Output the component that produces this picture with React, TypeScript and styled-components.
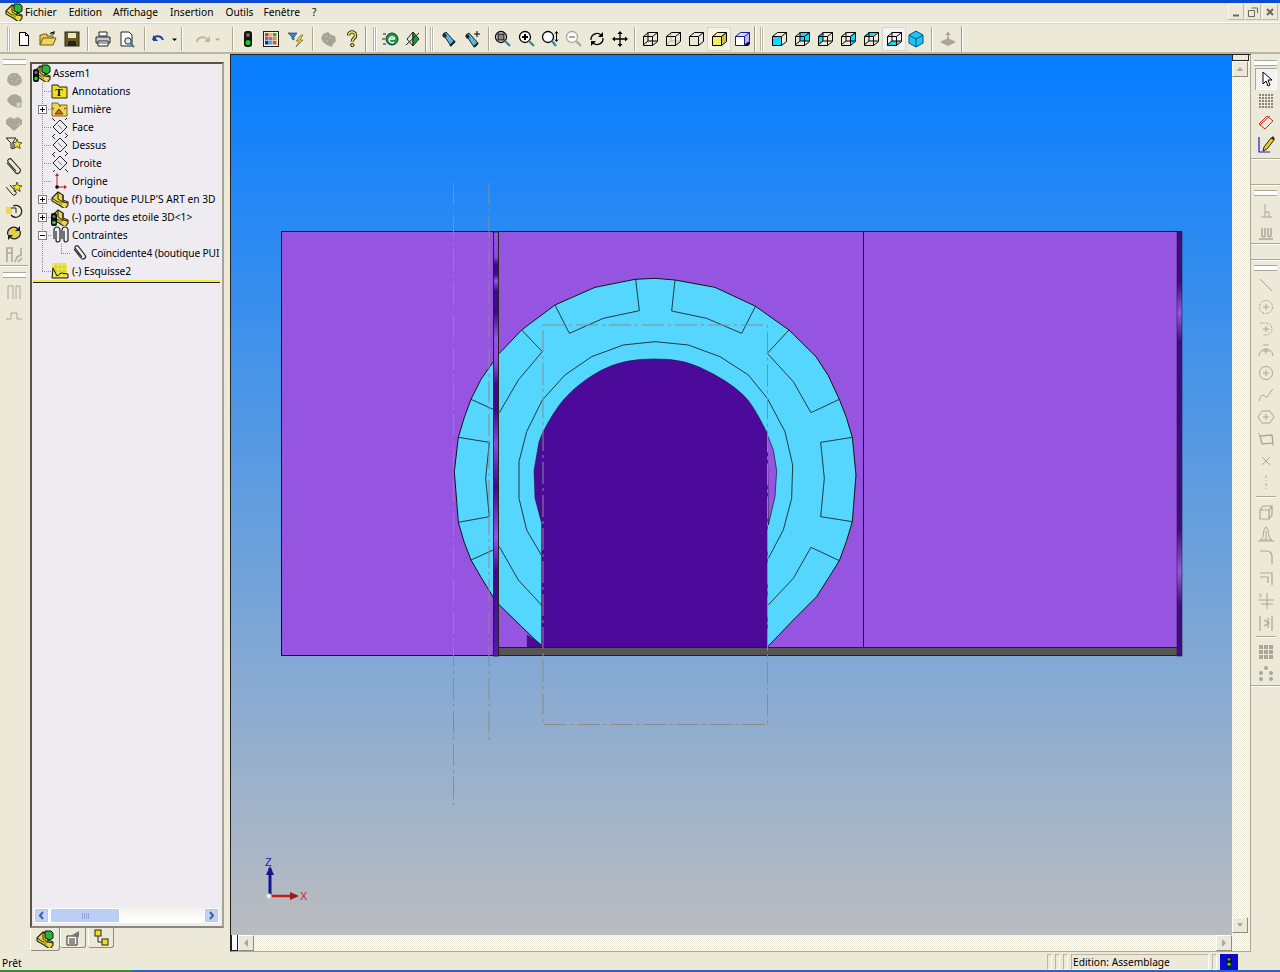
import React from "react";
import styled, { createGlobalStyle } from "styled-components";

const Global = createGlobalStyle`
  html, body { margin: 0; padding: 0; background: #ece9d8; }
  body { font-family: "Noto Sans", "Liberation Sans", sans-serif; font-size: 10.2px; color: #000; }
`;

const Page = styled.div`
  width: 1280px; height: 972px; overflow: hidden; display: flex; flex-direction: column; background: #ece9d8;
  & > * { flex: none; }
`;
const TitleStrip = styled.div`height: 3px; background: #0a4bd2;`;
const MenuBar = styled.div`
  height: 20px; display: flex; align-items: center; box-sizing: border-box; padding: 0 0 1px 2px; border-bottom: 1px solid #fff;
`;
const AppLogo = styled.div`width: 23px; height: 18px; display: flex; align-items: center; justify-content: center;`;
const MenuItem = styled.span<{ $mr: number }>`font-size: 10.2px; margin-right: ${p => p.$mr}px; line-height: 18px; white-space: nowrap;`;
const WindowButtons = styled.div`margin-left: auto; display: flex; gap: 1px; padding-right: 2px;`;
const WindowButton = styled.div`
  width: 16px; height: 16px; display: flex; align-items: center; justify-content: center; background: #ece9d8;
  box-shadow: inset -1px -1px 0 #bdbaa8, inset 1px 1px 0 #f7f6ef;
`;
const ToolRow = styled.div`
  height: 31px; box-sizing: border-box; display: flex; align-items: center; padding: 2px 0 0 4px;
  border-top: 1px solid #d8d5c4; border-bottom: 2px solid #b8b5a4;
`;
const Grip = styled.div<{ $w: number }>`
  width: ${p => p.$w}px; height: 24px; flex: none; display: flex; justify-content: center; gap: 1px;
  &::before, &::after { content: ""; width: 1px; height: 24px; background: #b9b6a5; box-shadow: 1px 0 0 #fff; }
`;
const Sep = styled.div<{ $w: number }>`
  width: ${p => p.$w}px; height: 24px; flex: none; display: flex; justify-content: center;
  &::before { content: ""; width: 1px; height: 24px; background: #aca899; box-shadow: 1px 0 0 #fff; }
`;
const Divider = styled.div<{ $w: number }>`
  width: ${p => p.$w}px; height: 26px; flex: none; display: flex; justify-content: center;
  &::before { content: ""; width: 1px; height: 26px; background: #9d9a8a; box-shadow: 1px 0 0 #fff; }
`;
const Slot = styled.div<{ $w: number; $on?: boolean }>`
  width: ${p => p.$w}px; height: 24px; flex: none; display: flex; align-items: center; justify-content: center;
  ${p => p.$on ? `background: repeating-conic-gradient(#fff 0 25%, #ece9d8 0 50%) 0 0/2px 2px; box-shadow: inset 0 0 0 1px #d8d5c8;` : ""}
`;
const Icon = styled.svg<{ $s?: number }>`
  width: ${p => p.$s || 18}px; height: ${p => p.$s || 18}px; display: block; flex: none;
`;

const Main = styled.div`height: 898px; display: flex;`;
const SideTools = styled.div<{ $w: number }>`
  width: ${p => p.$w}px; flex: none; display: flex; flex-direction: column; align-items: center; box-sizing: border-box;
`;
const VGrip = styled.div<{ $m: number }>`
  width: 23px; height: 4px; flex: none; box-sizing: content-box; border-top: 1px solid #aca899; border-bottom: 1px solid #aca899; background: #fff; margin-top: ${p => p.$m}px;
`;
const VSlot = styled.div<{ $h: number; $on?: boolean }>`
  height: ${p => p.$h}px; width: 22px; flex: none; display: flex; align-items: center; justify-content: center;
  ${p => p.$on ? `background: repeating-conic-gradient(#fff 0 25%, #ece9d8 0 50%) 0 0/2px 2px; box-shadow: inset 1px 1px 0 #aca899, inset -1px -1px 0 #fff;` : ""}
`;
const HLine = styled.div<{ $m: number; $full?: boolean }>`
  height: 1px; flex: none; align-self: ${p => p.$full ? "stretch" : "center"}; width: ${p => p.$full ? "auto" : "20px"};
  background: #aca899; box-shadow: 0 1px 0 #fff; margin-top: ${p => p.$m}px;
`;

const TreePane = styled.div`
  width: 202px; flex: none; box-sizing: border-box; padding: 8px 6px 0 2px; display: flex; flex-direction: column;
`;
const TreeBox = styled.div`
  height: 866px; flex: none; box-sizing: border-box; background: #eeecf0; border: 2px solid #55534a; border-right-color: #a5a296; border-bottom-color: #8a8778;
  display: flex; flex-direction: column; overflow: hidden;
`;
const TreeRows = styled.div`height: 216px; width: 188px; overflow: hidden; flex: none; padding-left: 1px; box-sizing: border-box;`;
const TreeRow = styled.div`height: 18px; display: flex; align-items: center; white-space: nowrap; overflow: hidden;`;
const Guide = styled.div<{ $v: "none" | "full" | "end" | "pass"; $h?: boolean; $w: number }>`
  width: ${p => p.$w}px; height: 18px; flex: none; display: flex; align-items: center; justify-content: center; box-sizing: border-box;
  background-repeat: no-repeat;
  background-image:
    ${p => p.$h ? "repeating-linear-gradient(90deg, #8f8d88 0 1px, transparent 1px 2px)" : "none"},
    ${p => p.$v === "none" ? "none" : "repeating-linear-gradient(0deg, #8f8d88 0 1px, transparent 1px 2px)"};
  background-size: 50% 1px, 1px ${p => p.$v === "end" ? "9px" : "18px"};
  background-position: right center, center top;
`;
const Twisty = styled.div`
  width: 9px; height: 9px; box-sizing: border-box; border: 1px solid #7f7d75; background: #fff; display: flex; align-items: center; justify-content: center;
`;
const RowIcon = styled.div`width: 18px; height: 18px; flex: none; display: flex; align-items: center; justify-content: center;`;
const RowText = styled.span<{ $g: number; $tight?: boolean }>`
  margin-left: ${p => p.$g}px; font-size: 10.2px; line-height: 18px; letter-spacing: ${p => p.$tight ? "-.12px" : "0"};
`;
const YellowRule = styled.div`height: 3px; width: 187px; box-sizing: border-box; margin-left: 1px; flex: none; background: #f6ec3c; border-bottom: 1px solid #222;`;
const TreeSpace = styled.div`flex: 1;`;
const HTreeScroll = styled.div`
  height: 15px; flex: none; margin: 0 3px 3px 2px; display: flex; align-items: center; background: linear-gradient(#f3f2ef, #fff);
`;
const XpBtn = styled.div`
  width: 15px; height: 15px; box-sizing: border-box; flex: none; border: 1px solid #fff; border-radius: 2px; background: #c3d3f7; box-shadow: 0 0 0 1px #b3c6ef inset;
  display: flex; align-items: center; justify-content: center;
`;
const XpThumb = styled.div`
  width: 70px; margin-left: 1px; height: 15px; box-sizing: border-box; border: 1px solid #fff; border-radius: 2px; background: #bdcef6;
  display: flex; align-items: center; justify-content: center; gap: 1px;
`;
const ThumbTick = styled.span`width: 1px; height: 6px; background: #8ea7d8;`;
const XpFill = styled.div`flex: 1;`;
const Tabs = styled.div`display: flex; padding-left: 0; height: 24px; flex: none;`;
const Tab = styled.div<{ $on?: boolean; $w: number }>`
  width: ${p => p.$w}px; box-sizing: border-box; height: ${p => p.$on ? 23 : 20}px; display: flex; align-items: center; justify-content: center; background: #ece9d8;
  border-right: 1px solid #8f8c7c; border-bottom: 1px solid #8f8c7c; border-radius: 0 0 3px 3px; margin-right: ${p => p.$on ? 0 : 2}px;
  ${p => p.$on ? "border-left: 1px solid #fff;" : "box-shadow: inset 1px 0 0 #fff;"}
`;

const ViewArea = styled.div`
  width: 1021px; flex: none; box-sizing: border-box; display: grid; grid-template-columns: 1001px 18px; grid-template-rows: 880px 16px;
  border-top: 1px solid #222; border-left: 1px solid #222; height: 898px; background: repeating-conic-gradient(#fff 0 25%, #ece9d8 0 50%) 0 0/2px 2px; border-right: 1px solid #aca899; border-bottom: 1px solid #aca899;
`;
const Canvas = styled.svg`width: 1001px; height: 880px; display: block;`;
const VScroll = styled.div`display: flex; flex-direction: column; align-items: flex-start;`;
const VScrollTop = styled.div`width: 17px; height: 6px; box-sizing: border-box; flex: none; background: #ece9d8; border: 1px solid #222; border-top: 0;`;
const ScrollSpacer = styled.div`flex: 1;`;
const HScroll = styled.div`display: flex; align-items: flex-start;`;
const HStub = styled.div`width: 7px; height: 16px; box-sizing: border-box; background: #fff; border: 1px solid #222; border-top: 0; flex: none;`;
const ScrollBtn = styled.div<{ $mb?: number }>`
  width: 16px; height: 16px; flex: none; box-sizing: border-box; background: #ece9d8; display: flex; align-items: center; justify-content: center;
  border: 1px solid; border-color: #fff #8f8c7c #8f8c7c #fff; margin-bottom: ${p => p.$mb || 0}px;
`;

const StatusBar = styled.div`
  height: 16px; margin-top: 2px; box-sizing: border-box; display: flex; align-items: stretch; padding-right: 0;
`;
const StatusText = styled.div`padding-left: 2px; flex: 1; font-size: 10.2px; line-height: 18px;`;
const Groove = styled.div<{ $w: number; $mr: number }>`
  width: ${p => p.$w}px; margin-right: ${p => p.$mr}px; box-sizing: border-box; flex: none; border: 1px solid #b9b6a5; border-right-color: #fff; border-bottom-color: #fff;
  font-size: 10.2px; line-height: 14px; padding-left: ${p => p.$w > 20 ? 1 : 0}px; white-space: nowrap;
`;
const StatusLight = styled.div`width: 18px; flex: none; background: #0a0ad2; display: flex; align-items: center; justify-content: center; margin-right: 42px;`;
const TaskStrip = styled.div`height: 2px; flex: none; display: flex; background: #2a64c8;`;
const TaskGreen = styled.div`width: 132px; background: #3a8a3a;`;

const S = ({ children, s = 18 }: { children: React.ReactNode; s?: number }) => (
  <Icon $s={s} viewBox="0 0 18 18">{children}</Icon>
);
const Mag = ({ c = "#000", h = "#2f8fa0", inner }: { c?: string; h?: string; inner?: React.ReactNode }) => (
  <S>
    <circle cx="7" cy="7" r="5.5" fill="#fff" stroke={c} strokeWidth="1.3" />
    {inner}
    <path d="M11 11l5 5" stroke={h} strokeWidth="2.4" />
  </S>
);
const Cube = ({ front, top, right, back, left, bottom, stroke = "#000", hidden = true, hiddenColor, shadow }: any) => (
  <S>
    {shadow && <path d="M4 16h11l2-2v-2H6z" fill="#000" />}
    {back && <path d="M7 2h9v9H7z" fill={back} />}
    {left && <path d="M2 6l5-4v9l-5 4z" fill={left} />}
    {bottom && <path d="M2 15l5-4h9l-5 4z" fill={bottom} />}
    {front && <path d="M2 6h9v9H2z" fill={front} />}
    {top && <path d="M2 6l5-4h9l-5 4z" fill={top} />}
    {right && <path d="M11 6l5-4v9l-5 4z" fill={right} />}
    {hidden && <path d="M7 2v9H16M7 11l-5 4" fill="none" stroke={hiddenColor || stroke} strokeWidth="1" />}
    <path d="M2.5 6.5h9v9h-9zM2.5 6.5l5-4h9v9l-5 4M11.5 6.5l5-4" fill="none" stroke={stroke} strokeWidth="1" />
  </S>
);
const Gray = "#a9a69a";
const GL = ({ children }: { children: React.ReactNode }) => (
  <S><g fill="none" stroke={Gray} strokeWidth="1">{children}</g></S>
);
const Blocks = ({ green, light }: { green?: boolean; light?: boolean }) => (
  <S s={18}>
    <path d="M1 8l6-6 5 3v5l5 2v3l-3 4-6-4-7-4z" fill="#efd93a" stroke="#222" strokeWidth="1.100" />
    <path d="M7 2v7l5 3v-7M1 8l6 4 5 0M12 12l5 1" fill="none" stroke="#222" strokeWidth="1" />
    <path d="M8 10l3 2v4l-3-2z" fill="#b9a420" />
    {green && <path d="M9 1h6l2 2v5l-3 2-5-2z" fill="#27b53a" stroke="#111" />}
    {light && <g><rect x="0" y="5" width="6" height="13" rx="2" fill="#111" /><circle cx="3" cy="8.500" r="1.500" fill="#777" /><circle cx="3" cy="14.500" r="1.800" fill="#2d2" /></g>}
  </S>
);
const Plane = () => (
  <S>
    <path d="M9 2l7 7-7 7-7-7z" fill="none" stroke="#222" />
    <path d="M7 7l4 4" stroke="#777" />
    <path d="M1 0l3 3M17 18l-3-3M2 18l2-2M16 0l-2 2" stroke="#222" />
  </S>
);
const Clip = ({ x = 0 }: { x?: number }) => (
  <path transform={`translate(${x} 0)`} d="M2 5v9a2 2 0 0 0 4 0V4a3 3 0 0 0-6 0v9" fill="none" stroke="#222" strokeWidth="1.2" />
);

const ic: Record<string, React.ReactNode> = {
  new: <S><path d="M4.5 2.5h6l3 3v10h-9zM10.5 2.5v3h3" fill="#fff" stroke="#000" /></S>,
  open: <S><path d="M1 15V5h2l1-1h4v2h6v2" fill="#e9c84a" stroke="#6b5a10" /><path d="M1 15l3-7h13l-3 7z" fill="#f1d35f" stroke="#6b5a10" /><path d="M11 4c1-2 3-2 4-1" stroke="#000" fill="none" /><path d="M15 1v3h-3" stroke="#000" fill="none" /></S>,
  save: <S><rect x="2" y="2" width="14" height="14" fill="#6a5c18" stroke="#222" /><rect x="5" y="3" width="8" height="5" fill="#e9e6c8" /><rect x="5" y="11" width="8" height="5" fill="#222" /></S>,
  print: <S><path d="M5 2h8v4H5z" fill="#fff" stroke="#222" /><path d="M2 7h14v6H2z" fill="#ccc" stroke="#222" /><path d="M4 11h10v5H4z" fill="#fff" stroke="#222" /><path d="M5 13h8" stroke="#555" /></S>,
  preview: <S><path d="M3 2h8l3 3v11H3z" fill="#fff" stroke="#222" /><circle cx="10" cy="11" r="3.2" fill="#d3ecf2" stroke="#222" /><path d="M12 13l4 4" stroke="#2f7f8f" strokeWidth="2" /></S>,
  undo: <S><path d="M5 10c2-5 9-5 10 0" transform="scale(-1 1) translate(-18 0)" fill="none" stroke="#1a3fb0" strokeWidth="2" /><path d="M3 5v6h5" fill="#1a3fb0" /></S>,
  redo: <S><path d="M3 12c0-5 7-6 10-3" fill="none" stroke="#b9b7ac" strokeWidth="2" /><path d="M16 6v6h-6z" fill="#b9b7ac" /></S>,
  down: <S s={9}><path d="M4 7h10l-5 5z" fill="#000" /></S>,
  downg: <S s={9}><path d="M4 7h10l-5 5z" fill="#a9a69a" /></S>,
  traffic: <S><rect x="5" y="1" width="8" height="16" rx="3" fill="#111" /><circle cx="9" cy="5" r="2" fill="#7a6a60" /><circle cx="9" cy="12.5" r="2.6" fill="#1ec42e" /></S>,
  colors: <S><rect x="1.5" y="1.5" width="15" height="15" fill="#f4f2dc" stroke="#222" /><rect x="3" y="3" width="3.5" height="3.5" fill="#d33" /><rect x="7" y="3" width="3.5" height="3.5" fill="#e8c020" /><rect x="11" y="3" width="3.5" height="3.5" fill="#3a3" /><rect x="3" y="7" width="3.5" height="3.5" fill="#38c" /><rect x="7" y="7" width="3.5" height="3.5" fill="#d4d" /><rect x="11" y="7" width="3.5" height="3.5" fill="#e83" /><rect x="3" y="11" width="3.5" height="3.5" fill="#22a" /><rect x="7" y="11" width="3.5" height="3.5" fill="#3bb" /><rect x="11" y="11" width="3.5" height="3.5" fill="#e44" /></S>,
  filter: <S><path d="M1 3h9L7 7v3L5 9V7z" fill="#2f8fc0" stroke="#1a3f80" strokeWidth=".7" /><path d="M14 5l-5 6h3l-3 6 7-7h-3l3-5z" fill="#e8d020" stroke="#554" strokeWidth=".6" /></S>,
  grayblob: <S><path d="M4 4l5-2 3 3 4 1 1 5-3 3-1 3-5-2-4-3-2-4z" fill="#a5a398" /><path d="M6 6h2M10 8h2M7 11h2" stroke="#c9c7bb" /></S>,
  help: <S><path d="M5.500 5.500a3.500 3.500 0 1 1 5.500 2.800C9.800 9.300 9.300 10 9.300 11.500" fill="none" stroke="#222" strokeWidth="3.400" /><path d="M5.500 5.500a3.500 3.500 0 1 1 5.500 2.800C9.800 9.300 9.300 10 9.300 11.500" fill="none" stroke="#f2e34c" strokeWidth="1.600" /><circle cx="9.300" cy="15" r="1.700" fill="#f2e34c" stroke="#222" /></S>,
  e: <S><path d="M1 4h3M0 9h3M1 14h3" stroke="#222" /><circle cx="10" cy="9" r="6" fill="#169a3a" stroke="#134" /><path d="M7 9h6M13 9a3 3 0 1 0-1 3" stroke="#fff" strokeWidth="1.4" fill="none" /></S>,
  xg: <S><path d="M3 9l6-7v14z" fill="#d5e9c8" stroke="#222" /><path d="M15 9L9 2v14z" fill="#19a03a" stroke="#222" /><path d="M2 15L15 3" stroke="#222" /></S>,
  bino: <S><path d="M3 4l3-2 9 10-4 4z" fill="#5fb8d8" stroke="#123" /><path d="M2 5l3-2 2 3-3 2z" fill="#222" /><path d="M10 16l5-5" stroke="#123" strokeWidth="2" /></S>,
  binop: <S><path d="M2 5l3-2 9 10-4 4z" fill="#5fb8d8" stroke="#123" /><path d="M1 6l3-2 2 3-3 2z" fill="#222" /><path d="M10 17l4-4" stroke="#123" strokeWidth="2" /><path d="M13 1v6M10 4h6" stroke="#000" /></S>,
  zfit: <Mag inner={<rect x="4" y="4" width="6" height="6" fill="#888" stroke="#000" />} />,
  zin: <Mag inner={<path d="M4 7h6M7 4v6" stroke="#000" strokeWidth="2" />} />,
  zarea: <S><circle cx="7" cy="7" r="5.500" fill="#fff" stroke="#000" strokeWidth="1.300" /><path d="M11 11l4 5" stroke="#2f8fa0" strokeWidth="2.400" /><path d="M15.500 2v9M14 3.500l1.500-2 1.500 2M14 9.500l1.500 2 1.500-2" stroke="#000" fill="none" /></S>,
  zout: <Mag c="#a9a69a" h="#a9a69a" inner={<path d="M4 7h6" stroke="#a9a69a" strokeWidth="2" />} />,
  rotate: <S><path d="M3 10a6 6 0 0 1 10-5" fill="none" stroke="#000" strokeWidth="1.300" /><path d="M15 8a6 6 0 0 1-10 5" fill="none" stroke="#000" strokeWidth="1.300" /><path d="M15 2v5h-5zM3 16v-5h5z" fill="#000" /></S>,
  move: <S><path d="M9 2v14M2 9h14" stroke="#000" strokeWidth="1.300" /><path d="M9 1l2.500 3h-5zM9 17l2.500-3h-5zM1 9l3-2.500v5zM17 9l-3-2.500v5z" fill="#000" /></S>,
  wire: <Cube />,
  hidden: <Cube hiddenColor="#b5b3a8" />,
  nohid: <Cube hidden={false} />,
  shaded: <Cube hidden={false} front="#f2ec6a" top="#f6f18a" right="#c9c33c" />,
  shadow: <Cube hidden={false} stroke="#1a1a90" front="#fff" top="#dde" right="#b8b8ee" shadow />,
  vfront: <Cube hidden={false} front="#19d5ff" />,
  vback: <Cube back="#19d5ff" />,
  vleft: <Cube left="#19d5ff" />,
  vright: <Cube right="#19d5ff" />,
  vtop: <Cube top="#19d5ff" />,
  vbottom: <Cube bottom="#19d5ff" />,
  viso: <S><path d="M9 1l7 4v8l-7 4-7-4V5z" fill="#19c8f5" stroke="#0d4a90" /><path d="M2 5l7 4 7-4M9 9v8" stroke="#0d4a90" fill="none" /></S>,
  plane3: <S><path d="M9 2v8" stroke={Gray} strokeWidth="1.500" /><path d="M6 5l3-3 3 3z" fill={Gray} /><path d="M1 12l8-4 8 4-8 4z" fill={Gray} /></S>,

  l1: <S><path d="M3 6l4-3 5 0 4 4 1 5-3 3-4 1-5-1-3-4z" fill={Gray} /><path d="M5 7h2M9 5h2M12 9h2M6 11h2M10 12h2" stroke="#c9c7bb" /></S>,
  l2: <S><path d="M2 7l4-4 5-1 5 3 1 5-2 2v3h-5l-4-2-3-3z" fill={Gray} /><path d="M11 10h5v5h-5z" fill="#d5d3c8" stroke={Gray} /></S>,
  l3: <S><path d="M1 6l4-3 4 2 4-2 4 3 0 4-8 7-8-7z" fill={Gray} /><path d="M12 12l3-3" stroke="#d5d3c8" /></S>,
  l4: <S><path d="M1 2h10l-3 4v7l-2-1V7z" fill="none" stroke="#222" /><path d="M12 3l1.500 3.500 3.500.3-2.700 2.300.9 3.500-3.200-2-3 2 .9-3.500L7.500 6.800l3.500-.3z" fill="#f2e020" stroke="#222" strokeWidth=".7" /></S>,
  l5: <S><path d="M2 6l8 9a2.500 2.500 0 0 0 5-3L7 3a2 2 0 0 0-4 2l8 9" fill="none" stroke="#222" strokeWidth="1.100" /></S>,
  l6: <S><path d="M1 8l6 7a2 2 0 0 0 4-2L5 6" fill="none" stroke="#222" /><path d="M12 3l1.500 3.500 3.500.3-2.700 2.300.9 3.500-3.200-2-3 2 .9-3.500L7.500 6.800l3.500-.3z" fill="#f2e020" stroke="#222" strokeWidth=".7" /></S>,
  l7: <S><rect x="1" y="5" width="6" height="7" fill="#e8d85a" /><path d="M8 4a6 6 0 1 1-2 9" fill="none" stroke="#222" strokeWidth="1.300" /><path d="M6 6h5v5" fill="none" stroke="#222" /></S>,
  l8: <S><circle cx="9" cy="9" r="5" fill="#dfcf4a" /><path d="M3 11a6 6 0 0 1 10-6M15 7a6 6 0 0 1-10 6" fill="none" stroke="#222" strokeWidth="1.300" /><path d="M15 2v5h-5zM3 16v-5h5z" fill="#222" /></S>,
  l9: <GL><path d="M2 17V3h5v14M2 8h5M10 17l2-5 4-2V3M13 17l4-4" strokeWidth="1.500" /></GL>,
  l10: <GL><path d="M3 16V3h5v13M11 16V3h4v13" /></GL>,
  l11: <GL><path d="M1 13h5V7h6v6h5" /></GL>,

  arrow: <S><path d="M6 2v12l3-3 2 5 2-1-2-5h4z" fill="#fff" stroke="#000" /></S>,
  grid: <S><g fill="#222">{[3, 6, 9, 12, 15].flatMap(x => [3, 6, 9, 12, 15].map(y => <rect key={x + "-" + y} x={x - .7} y={y - .7} width="1.400" height="1.400" />))}</g></S>,
  dim: <S><path d="M2 11l8-8 6 5-8 8z" fill="none" stroke="#d22" /><path d="M3 12l10-9" stroke="#d22" /></S>,
  sketch: <S><path d="M2 1v15h11" fill="none" stroke="#1a1ac0" strokeWidth="1.200" /><path d="M7 11l7-9 3 2-7 9-4 2z" fill="#e8d020" stroke="#222" /><path d="M14 2l3 2 1-1-2-3z" fill="#6a1010" /></S>,
  r1: <GL><path d="M4 16h11M8 16V3M8 11h4v5" /></GL>,
  r2: <GL><path d="M2 16h14M5 5v8a2 2 0 0 0 3 0V5M11 5v8a2 2 0 0 0 3 0V5" strokeWidth="1.500" /></GL>,
  r3: <GL><path d="M3 3l12 12" /></GL>,
  r4: <GL><circle cx="9" cy="9" r="6.500" strokeDasharray="2 1" /><path d="M9 6v6M6 9h6" /></GL>,
  r5: <GL><path d="M3 3h6a6 6 0 0 1 0 12H6" strokeDasharray="2 1" /><path d="M9 6v6M6 9h6" /></GL>,
  r6: <GL><path d="M2 14a7 7 0 0 1 14 0" /><path d="M9 6v6M6 9h6M6 3h6" /></GL>,
  r7: <GL><circle cx="9" cy="9" r="6.500" /><path d="M9 6v6M6 9h6" /></GL>,
  r8: <GL><path d="M2 15c1-3 2-6 4-6s2 3 4 2 3-6 6-8" /></GL>,
  r9: <GL><path d="M5 3h8l4 6-4 6H5L1 9z" /><path d="M9 6v6M6 9h6" /></GL>,
  r10: <GL><path d="M3 6l12-1 1 8-11 1z" strokeWidth="1.400" /><path d="M1 3l3 3M15 14l2 2" /></GL>,
  r11: <GL><path d="M5 5l8 8M13 5l-8 8" /></GL>,
  r12: <GL><path d="M9 1v16" strokeDasharray="3 2 1 2" /></GL>,
  r13: <GL><path d="M3 7h9v9H3zM3 7l3-4h9l-3 4M15 3v9l-3 4" strokeWidth="1.200" /></GL>,
  r14: <GL><path d="M9 1l2 3 1 7 3 3H3l3-3 1-7zM1 15h16M9 5v9" /></GL>,
  r15: <GL><path d="M3 3h7a5 5 0 0 1 5 5v8" strokeWidth="1.200" /></GL>,
  r16: <GL><path d="M3 3h12v12M3 7h8v6" strokeWidth="1.200" /></GL>,
  r17: <GL><path d="M10 1v16M2 8h15M4 12h12M2 2c3 0 3 3 0 3" /></GL>,
  r18: <GL><path d="M3 2v15M15 2v15M7 6l5 3-5 3M11 4v10" strokeWidth="1.200" /></GL>,
  r19: <S><g fill={Gray}>{[2, 7, 12].flatMap(x => [2, 7, 12].map(y => <rect key={x + "_" + y} x={x} y={y} width="4" height="4" />))}</g></S>,
  r20: <S><g fill={Gray}><circle cx="9" cy="3" r="2" /><circle cx="4" cy="8" r="2" /><circle cx="14" cy="8" r="2" /><circle cx="4" cy="14" r="2" /><circle cx="14" cy="14" r="2" /></g></S>,
  close: <Icon $s={10} viewBox="0 0 10 10"><path d="M2 2l6 6M8 2l-6 6" stroke="#6b6a60" strokeWidth="2" /></Icon>,
  min: <Icon $s={10} viewBox="0 0 10 10"><path d="M2 8.500h6" stroke="#6b6a60" strokeWidth="2" /></Icon>,
  restore: <Icon $s={10} viewBox="0 0 10 10"><path d="M3.500 1h6v5M.5 3.500h6v6h-6z" fill="none" stroke="#6b6a60" /></Icon>,
};

type TI = [string, number, boolean?];
const tools: TI[] = [
  ["grip", 8],
  ["new", 24], ["open", 24], ["save", 24], ["sep", 6], ["print", 26], ["preview", 22], ["sep", 12], ["undo", 18], ["down", 12], ["sep", 2],
  ["gap", 12], ["redo", 18], ["downg", 10], ["gap", 5], ["sep", 10], ["traffic", 22], ["colors", 24], ["filter", 26], ["sep", 6], ["grayblob", 26], ["help", 22],
  ["div", 4], ["grip", 14], ["e", 20], ["xg", 23], ["div", 2],
  ["grip", 11], ["bino", 24], ["binop", 24], ["sep", 6], ["zfit", 24], ["zin", 23], ["zarea", 24], ["zout", 23], ["rotate", 23], ["move", 23], ["sep", 7],
  ["wire", 23], ["hidden", 23], ["nohid", 23], ["shaded", 24, true], ["shadow", 22], ["div", 2],
  ["grip", 12], ["vfront", 23], ["vback", 23], ["vleft", 23], ["vright", 23], ["vtop", 23], ["vbottom", 24, true], ["viso", 20], ["sep", 10], ["plane3", 24], ["div", 2],
];

const tree = [
  { t: "Annotations", ic: <S><path d="M1 3h6l1 2h8v11H1z" fill="#f2e020" stroke="#222" /><text x="8" y="14" fontSize="11" fontWeight="700" fontFamily="Liberation Serif, serif" textAnchor="middle">T</text></S> },
  { t: "Lumière", tw: "+", ic: <S><path d="M1 3h6l1 2h8v11H1z" fill="#e8d85a" stroke="#7a6a10" /><path d="M4 14l4-5 4 5zM9 7v-2M13 9l2-1M3 9L1 8" fill="#d26a10" stroke="#7a2a10" /></S> },
  { t: "Face", ic: <Plane /> },
  { t: "Dessus", ic: <Plane /> },
  { t: "Droite", ic: <Plane /> },
  { t: "Origine", ic: <S><path d="M6 15V3M6 15h9" stroke="#d21818" /><path d="M6 1l2 3H4zM16 15l-3-2v4z" fill="#d21818" /><circle cx="6" cy="15" r="1.800" fill="#000" /></S> },
  { t: "(f) boutique PULP'S ART en 3D", tw: "+", ic: <Blocks /> },
  { t: "(-) porte des etoile 3D<1>", tw: "+", ic: <Blocks light /> },
  { t: "Contraintes", tw: "-", ic: <S><Clip x={3} /><Clip x={11} /></S> },
];

const TwMark = ({ k }: { k: string }) => (
  <Icon $s={7} viewBox="0 0 7 7"><path d={k === "+" ? "M1 3.500h5M3.500 1v5" : "M1 3.500h5"} stroke="#000" /></Icon>
);

const menus: [string, number][] = [["Fichier", 12], ["Edition", 11], ["Affichage", 12], ["Insertion", 12], ["Outils", 10], ["Fenêtre", 12], ["?", 0]];
const left: [string, number][] = [["l1", 22], ["l2", 22], ["l3", 22], ["l4", 21], ["l5", 22], ["l6", 22], ["l7", 23], ["l8", 21], ["l9", 22]];
const rt1: [string, number, boolean?][] = [["arrow", 22, true], ["grid", 21], ["dim", 22], ["sketch", 23]];
const rt3 = [["r3", 22], ["r4", 22], ["r5", 22], ["r6", 22], ["r7", 22], ["r8", 22], ["r9", 22], ["r10", 22], ["r11", 22], ["r12", 22]] as [string, number][];
const rt4 = [["r13", 22], ["r14", 23], ["r15", 22], ["r16", 22], ["r17", 22], ["r18", 22]] as [string, number][];

const pts = (a: number[][]) => a.map(p => p.join(",")).join(" ");
const outer = [[178,280],[245,210],[345,135],[465,82],[585,58],[645,55],[705,60],[825,82],[945,138],[1047,210],[1128,290],[1165,347],[1198,418],[1219,472],[1237,532],[1248,645],[1237,785],[1219,845],[1198,902],[1168,950],[1130,1010],[1060,1080],[985,1158],[305,1158],[245,1100],[178,1035],[160,1012],[122,950],[93,900],[72,845],[55,787],[43,635],[55,532],[73,472],[93,418],[123,358],[160,305]];
const ring = [[307,420],[375,345],[455,290],[550,255],[645,245],[745,255],[840,290],[925,345],[982,415],[1035,515],[1058,615],[1055,715],[1030,810],[985,895]];
const ringL = [[307,420],[260,515],[237,605],[237,715],[260,810],[307,890]];
const doorArc = [[307,520],[340,455],[400,385],[480,330],[555,302],[645,295],[735,302],[820,340],[890,385],[940,435],[982,520]];
const smooth = (a: number[][]) => {
  let d = `M${a[0][0]} ${a[0][1]}`;
  for (let i = 1; i < a.length - 1; i++) {
    const mx = (a[i][0] + a[i + 1][0]) / 2, my = (a[i][1] + a[i + 1][1]) / 2;
    d += ` Q${a[i][0]} ${a[i][1]} ${i === a.length - 2 ? a[i + 1][0] : mx} ${i === a.length - 2 ? a[i + 1][1] : my}`;
  }
  return d;
};
const doorPath = smooth(doorArc) + " L982 1162 L262 1162 L262 1125 L305 1155 L305 790 L285 715 L282 632 L297 545 Z";
const rightHole = [[982,525],[1000,570],[1010,632],[1005,710],[985,795]];
const segs = [
  [[345,135],[388,220],[490,175],[598,152],[587,58]],
  [[705,60],[695,153],[800,175],[905,220],[947,138]],
  [[245,210],[307,275],[235,360],[178,458]],
  [[1047,210],[982,280],[1060,365],[1113,458],[1198,418]],
  [[93,418],[160,448]],
  [[55,532],[148,547],[137,655],[148,770],[55,787]],
  [[93,900],[160,870]],
  [[178,860],[235,960],[307,1038]],
  [[1237,532],[1142,547],[1153,655],[1142,770],[1237,785]],
  [[1198,902],[1113,862],[1060,955],[985,1035]],
];
const barStops: [number, string][] = [[0,"#9655e0"],[.06,"#8a4ad8"],[.075,"#3f0a86"],[.1,"#3f0a86"],[.115,"#9655e0"],[.14,"#3f0a86"],[.19,"#3f0a86"],[.25,"#9655e0"],[.31,"#8a4ad8"],[.36,"#3f0a86"],[.42,"#3f0a86"],[.5,"#8a4ad8"],[.6,"#3f0a86"],[.72,"#9655e0"],[.8,"#3f0a86"],[1,"#5a1aa8"]];
const bar2Stops: [number, string][] = [[0,"#3f0a86"],[.12,"#3f0a86"],[.19,"#9655e0"],[.26,"#3f0a86"],[.7,"#3f0a86"],[.8,"#9655e0"],[.88,"#3f0a86"],[1,"#3f0a86"]];

const Model = () => (
  <Canvas viewBox="231 55 1001 880">
    <defs>
      <linearGradient id="sky" x1="0" y1="0" x2="0" y2="1">
        <stop offset="0" stopColor="#067dff" />
        <stop offset="1" stopColor="#bbbcc0" />
      </linearGradient>
      <linearGradient id="bar" x1="0" y1="0" x2="0" y2="1">
        {barStops.map(([o, c]) => <stop key={o} offset={o} stopColor={c} />)}
      </linearGradient>
      <linearGradient id="bar2" x1="0" y1="0" x2="0" y2="1">
        {bar2Stops.map(([o, c]) => <stop key={o} offset={o} stopColor={c} />)}
      </linearGradient>
    </defs>
    <rect x="231" y="55" width="1001" height="880" fill="url(#sky)" />
    <rect x="281.500" y="231.500" width="900" height="424" fill="#9655e0" stroke="#111" />
    <path d="M863.500 232v416" stroke="#111" />
    <g transform="translate(440 260) scale(.33333)">
      <polygon points={pts(outer)} fill="#55d6ff" stroke="#111" strokeWidth="3" />
      <path d={doorPath} fill="#4b0a9a" stroke="#111" strokeWidth="1.500" />
      <polygon points={pts(rightHole)} fill="#9655e0" stroke="#111" strokeWidth="2" />
      <polyline points={pts(ring)} fill="none" stroke="#111" strokeWidth="2.400" />
      <polyline points={pts(ringL)} fill="none" stroke="#111" strokeWidth="2.400" />
      {segs.map((s, i) => <polyline key={i} points={pts(s)} fill="none" stroke="#111" strokeWidth="2.400" />)}
    </g>
    <rect x="498.500" y="647.500" width="679" height="8" fill="#555" stroke="#222" />
    <rect x="493.500" y="232" width="5" height="424" fill="url(#bar)" stroke="#222" strokeWidth="1" />
    <rect x="1177" y="232" width="5" height="424" fill="url(#bar2)" stroke="#222" strokeWidth=".6" />
    <g fill="none" stroke="#8b8b8b" strokeDasharray="22 4 3 4">
      <path d="M453.500 183v622M489 183v560" />
      <rect x="543" y="325" width="224.500" height="399.500" />
    </g>
    <path d="M270 896v-28" stroke="#14148c" strokeWidth="3" />
    <path d="M266 875l4-9 4 9z" fill="#14148c" />
    <path d="M270 896h26" stroke="#c02020" strokeWidth="2.500" />
    <path d="M290 892l9 4-9 4z" fill="#a01818" />
    <circle cx="269" cy="896" r="2.500" fill="#dff0d8" />
    <text x="265" y="866" fontSize="11" fill="#2020b0" fontFamily="Liberation Sans, sans-serif">Z</text>
    <text x="300" y="900" fontSize="11" fill="#d02020" fontFamily="Liberation Sans, sans-serif">X</text>
  </Canvas>
);

const Tri = ({ d }: { d: "u" | "d" | "l" | "r" }) => {
  const m = { u: "M2 7l3-4 3 4z", d: "M2 3l3 4 3-4z", l: "M7 1v8L3 5z", r: "M3 1v8l4-4z" }[d];
  return <Icon $s={10} viewBox="0 0 10 10"><path d={m} fill="#a9a69a" /></Icon>;
};
const Chev = ({ r }: { r?: boolean }) => (
  <Icon $s={9} viewBox="0 0 9 9"><path d={r ? "M3 1l3 3.500-3 3.500" : "M6 1L3 4.500 6 8"} fill="none" stroke="#3f5f9f" strokeWidth="2" /></Icon>
);

export default function App() {
  return (
    <Page>
      <Global />
      <TitleStrip />
      <MenuBar>
        <AppLogo><Blocks green /></AppLogo>
        {menus.map(([m, mr]) => <MenuItem key={m} $mr={mr}>{m}</MenuItem>)}
        <WindowButtons>
          <WindowButton>{ic.min}</WindowButton>
          <WindowButton>{ic.restore}</WindowButton>
          <WindowButton>{ic.close}</WindowButton>
        </WindowButtons>
      </MenuBar>
      <ToolRow>
        {tools.map(([k, w, on], i) =>
          k === "grip" ? <Grip key={i} $w={w} /> :
          k === "sep" ? <Sep key={i} $w={w} /> :
          k === "div" ? <Divider key={i} $w={w} /> :
          k === "gap" ? <Slot key={i} $w={w} /> :
          <Slot key={i} $w={w} $on={on as boolean}>{ic[k]}</Slot>
        )}
      </ToolRow>
      <Main>
        <SideTools $w={28}>
          <VGrip $m={5} />
          <VSlot $h={3} />
          {left.map(([k, h]) => <VSlot key={k} $h={h}>{ic[k]}</VSlot>)}
          <HLine $m={0} $full />
          <VGrip $m={6} />
          <VSlot $h={2} />
          <VSlot $h={23}>{ic.l10}</VSlot>
          <VSlot $h={23}>{ic.l11}</VSlot>
        </SideTools>
        <TreePane>
          <TreeBox>
            <TreeRows>
              <TreeRow>
                <RowIcon><Blocks green light /></RowIcon>
                <RowText $g={2}>Assem1</RowText>
              </TreeRow>
              {tree.map(r => (
                <TreeRow key={r.t}>
                  <Guide $w={18} $v="full" $h>{r.tw && <Twisty><TwMark k={r.tw} /></Twisty>}</Guide>
                  <RowIcon>{r.ic}</RowIcon>
                  <RowText $g={3}>{r.t}</RowText>
                </TreeRow>
              ))}
              <TreeRow>
                <Guide $w={18} $v="full" />
                <Guide $w={20} $v="end" $h />
                <RowIcon><S><path d="M3 5l7 9a2.500 2.500 0 0 0 4-3L7 2a2 2 0 0 0-3 2l7 9" fill="none" stroke="#222" strokeWidth="1.200" /></S></RowIcon>
                <RowText $g={2} $tight>Coïncidente4 (boutique PUI</RowText>
              </TreeRow>
              <TreeRow>
                <Guide $w={18} $v="end" $h />
                <RowIcon><S><rect x="1" y="1" width="15" height="15" fill="#f2e85a" /><path d="M1 5h15M1 9h15M5 1v15M9 1v15M13 1v15" stroke="#d8c820" /><path d="M2 6l4 8 4-3 7 1v4H1z" fill="none" stroke="#111" /></S></RowIcon>
                <RowText $g={3}>(-) Esquisse2</RowText>
              </TreeRow>
            </TreeRows>
            <YellowRule />
            <TreeSpace />
            <HTreeScroll>
              <XpBtn><Chev /></XpBtn>
              <XpThumb>{[0, 1, 2, 3].map(i => <ThumbTick key={i} />)}</XpThumb>
              <XpFill />
              <XpBtn><Chev r /></XpBtn>
            </HTreeScroll>
          </TreeBox>
          <Tabs>
            <Tab $on $w={30}><Blocks green /></Tab>
            <Tab $w={26}><S><path d="M3 7h10v9H3z" fill="#fff" stroke="#222" /><path d="M5 10h6M5 12h6M5 14h6" stroke="#222" /><path d="M8 6l7-4v6z" fill="#777" /></S></Tab>
            <Tab $w={26}><S><rect x="3" y="1" width="6" height="6" fill="#f2e020" stroke="#222" /><rect x="10" y="10" width="6" height="6" fill="#f2e020" stroke="#222" /><path d="M6 7v6h4" stroke="#222" fill="none" /></S></Tab>
          </Tabs>
        </TreePane>
        <ViewArea>
          <Model />
          <VScroll>
            <VScrollTop />
            <ScrollBtn><Tri d="u" /></ScrollBtn>
            <ScrollSpacer />
            <ScrollBtn $mb={2}><Tri d="d" /></ScrollBtn>
          </VScroll>
          <HScroll>
            <HStub />
            <ScrollBtn><Tri d="l" /></ScrollBtn>
            <ScrollSpacer />
            <ScrollBtn><Tri d="r" /></ScrollBtn>
          </HScroll>
        </ViewArea>
        <SideTools $w={29}>
          <VGrip $m={6} />
          <VSlot $h={2} />
          {rt1.map(([k, h, on]) => <VSlot key={k} $h={h} $on={on}>{ic[k]}</VSlot>)}
          <HLine $m={2} $full />
          <HLine $m={25} $full />
          <VGrip $m={5} />
          <VSlot $h={3} />
          <VSlot $h={22}>{ic.r1}</VSlot>
          <VSlot $h={21}>{ic.r2}</VSlot>
          <HLine $m={1} $full />
          <HLine $m={15} $full />
          <VGrip $m={5} />
          <VSlot $h={3} />
          {rt3.map(([k, h]) => <VSlot key={k} $h={h}>{ic[k]}</VSlot>)}
          <HLine $m={2} />
          <VSlot $h={4} />
          {rt4.map(([k, h]) => <VSlot key={k} $h={h}>{ic[k]}</VSlot>)}
          <HLine $m={2} />
          <VSlot $h={4} />
          <VSlot $h={22}>{ic.r19}</VSlot>
          <VSlot $h={22}>{ic.r20}</VSlot>
          <HLine $m={0} $full />
        </SideTools>
      </Main>
      <StatusBar>
        <StatusText>Prêt</StatusText>
        <Groove $w={5} $mr={3} />
        <Groove $w={5} $mr={3} />
        <Groove $w={5} $mr={3} />
        <Groove $w={138} $mr={3}>Edition: Assemblage</Groove>
        <Groove $w={5} $mr={3} />
        <StatusLight><S s={14}><rect x="6" y="2" width="6" height="14" rx="2" fill="#111" /><circle cx="9" cy="5.500" r="1.800" fill="#888" /><circle cx="9" cy="12" r="2.200" fill="#1ee02e" /></S></StatusLight>
      </StatusBar>
      <TaskStrip><TaskGreen /></TaskStrip>
    </Page>
  );
}
